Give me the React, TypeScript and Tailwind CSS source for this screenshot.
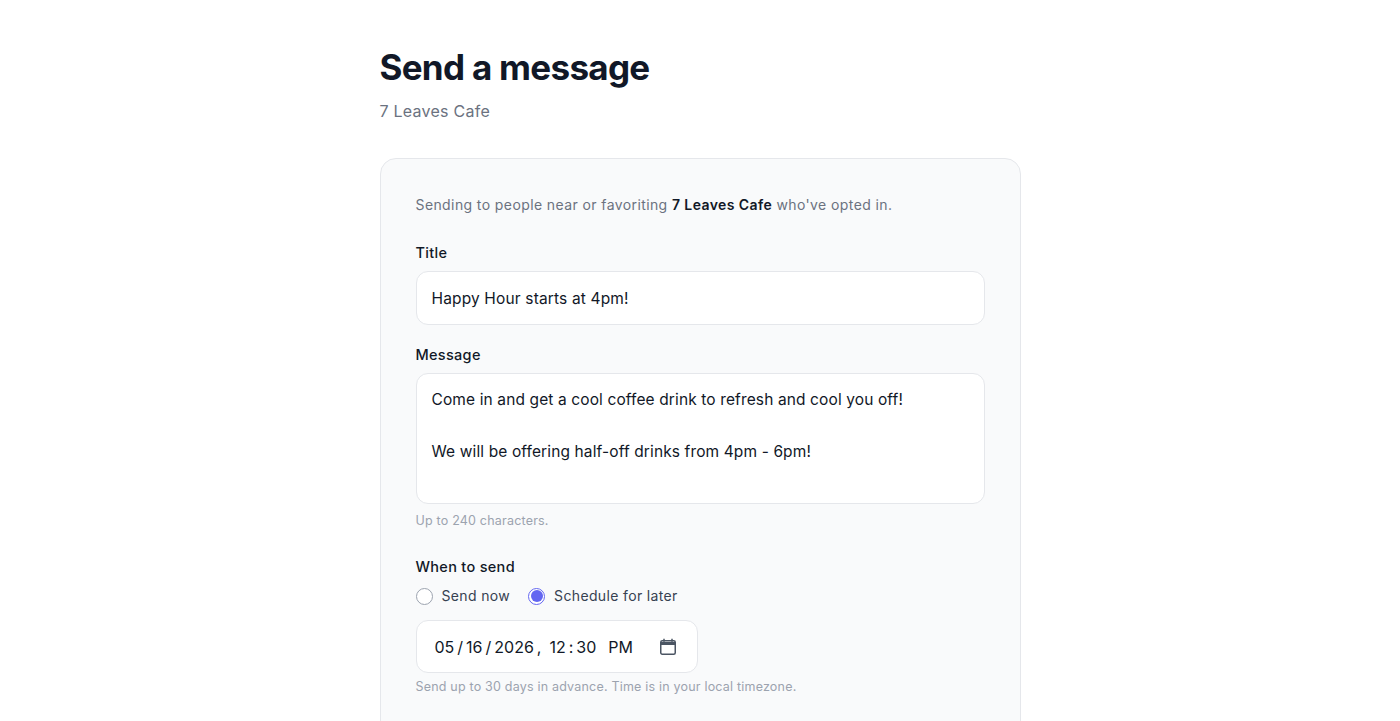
import React from "react";

const font = "font-['Inter',sans-serif] [font-optical-sizing:none]";
const labelCls = "block text-[14.5px] leading-[22px] font-medium tracking-[0.3px] text-[#111827]";
const hintCls = "text-[12.5px] leading-[18px] tracking-[0.2px] text-[#9ca3af]";

export default function App() {
  return (
    <div className={`${font} h-[721px] overflow-hidden bg-white`}>
      <main className="mx-auto w-[641px] pt-[42px]">
        <h1 className="text-[35px] leading-[50px] font-bold tracking-[-0.7px] text-[#111827]">Send a message</h1>
        <p className="mt-[5px] text-[16px] leading-[28px] tracking-[0.25px] text-[#6b7280]">7 Leaves Cafe</p>

        <section className="mt-[33px] rounded-[16px] border border-[#e5e7eb] bg-[#f9fafb] px-[35px] pt-[35px] pb-10">
          <p className="text-[14px] leading-[22px] tracking-[0.4px] text-[#6b7280]">
            Sending to people near or favoriting <strong className="font-semibold text-[#111827]">7 Leaves Cafe</strong> who've opted in.
          </p>

          <label className={`mt-[26px] ${labelCls}`}>Title</label>
          <input
            readOnly
            value="Happy Hour starts at 4pm!"
            className="mt-[7px] block h-[54px] w-full rounded-[12px] border border-[#e5e7eb] bg-white px-[15px] text-[15.5px] tracking-[0.15px] text-[#111827] outline-none"
          />

          <label className={`mt-[19px] ${labelCls}`}>Message</label>
          <textarea
            readOnly
            value={"Come in and get a cool coffee drink to refresh and cool you off!\n\nWe will be offering half-off drinks from 4pm - 6pm!"}
            className="mt-[7px] block h-[131px] w-full resize-none rounded-[12px] border border-[#e5e7eb] bg-white px-[15px] py-[13px] text-[15.5px] leading-[26px] tracking-[0.12px] text-[#111827] outline-none"
          />
          <p className={`mt-[8px] ${hintCls}`}>Up to 240 characters.</p>

          <label className={`mt-[26px] ${labelCls}`}>When to send</label>
          <div className="mt-[7px] flex items-center gap-[18px] text-[14px] leading-[22px] tracking-[0.35px] text-[#374151]">
            <span className="flex items-center gap-[9px]">
              <span className="h-[17px] w-[17px] rounded-full border border-[#9ca3af] bg-white" />
              Send now
            </span>
            <span className="flex items-center gap-[9px]">
              <span className="flex h-[17px] w-[17px] items-center justify-center rounded-full border border-[#6366f1] bg-white">
                <span className="h-[12px] w-[12px] rounded-full bg-[#6366f1]" />
              </span>
              Schedule for later
            </span>
          </div>

          <div className="mt-[13px] flex h-[53px] w-[282px] items-center justify-between rounded-[12px] border border-[#e5e7eb] bg-white pr-[20px] pl-[18px] text-[16px] text-[#111827]">
            <span className="flex gap-[3px]">
              <span>05</span><span>/</span><span>16</span><span>/</span><span>2026</span><span>,</span>
              <span className="ml-[5px]">12</span><span>:</span><span>30</span>
              <span className="ml-[9px]">PM</span>
            </span>
            <svg width="18" height="18" viewBox="0 0 18 18" fill="none" stroke="#4b5563" strokeWidth="1.5">
              <rect x="1.75" y="2.75" width="14.5" height="13.5" rx="1.5" />
              <path d="M1.75 5.5h14.5" strokeWidth="3" />
              <path d="M5 .75v3M13 .75v3" />
            </svg>
          </div>
          <p className={`mt-[5px] ${hintCls}`}>Send up to 30 days in advance. Time is in your local timezone.</p>
        </section>
      </main>
    </div>
  );
}
